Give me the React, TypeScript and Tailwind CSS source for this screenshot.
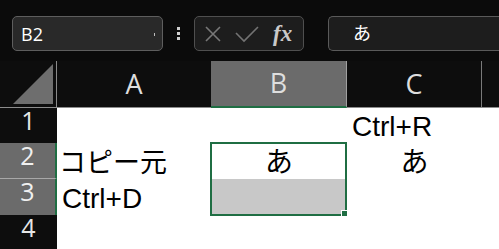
import React from 'react';

const cellFont = "font-['Liberation_Sans','Noto_Sans_CJK_JP',sans-serif]";
const headFont = "font-['Open_Sans','Noto_Sans',sans-serif]";

interface Row {
  n: string;
  h: string;
  sel: boolean;
  a?: string;
  b?: string;
  c?: string;
  fill?: boolean;
}

const rows: Row[] = [
  { n: '1', h: 'h-[35px]', sel: false, c: 'Ctrl+R' },
  { n: '2', h: 'h-[36px]', sel: true, a: 'コピー元', b: 'あ', c: 'あ' },
  { n: '3', h: 'h-[36px]', sel: true, a: 'Ctrl+D', fill: true },
  { n: '4', h: 'h-[36px]', sel: false },
];

const cols = 'grid grid-cols-[57px_154px_136px_135px_1fr]';

export default function App() {
  return (
    <div className="w-[499px] h-[249px] overflow-hidden bg-[#0b0b0b] select-none">
      {/* Formula bar */}
      <div className="h-[61px] flex items-start pt-[16px] pl-[12px]">
        <div className="w-[151px] h-[35px] rounded-[5px] bg-[#292929] border border-[#5e5e5e] flex items-center pl-[8px] pr-[7px] justify-between">
          <span className={`${headFont} text-[18px] leading-none text-white`}>B2</span>
          <span className="w-[1px] h-[3px] bg-[#bdbdbd] mt-[1px]" />
        </div>
        <div className="w-[31px] h-[35px] flex flex-col items-center justify-center gap-[2px]">
          <span className="w-[3px] h-[3px] bg-[#cfcfcf]" />
          <span className="w-[3px] h-[3px] bg-[#cfcfcf]" />
          <span className="w-[3px] h-[3px] bg-[#cfcfcf]" />
        </div>
        <div className="w-[110px] h-[35px] rounded-[5px] bg-[#1d1d1d] border border-[#4f4f4f] flex items-center pl-[9px]">
          <svg width="18" height="18" viewBox="0 0 18 18" className="mt-[1px]">
            <path d="M2 2 L16 16 M16 2 L2 16" stroke="#787878" strokeWidth="1.6" fill="none" />
          </svg>
          <svg width="26" height="18" viewBox="0 0 26 18" className="ml-[12px] mt-[1px]">
            <path d="M2 8 L10 16 L24 2" stroke="#737373" strokeWidth="1.6" fill="none" />
          </svg>
          <span className="ml-[13px] font-['Liberation_Serif',serif] italic font-bold text-[23px] leading-none text-[#c9c9c9]">
            fx
          </span>
        </div>
        <div className="ml-[24px] flex-1 h-[35px] rounded-l-[5px] bg-[#1d1d1d] border border-r-0 border-[#5a5a5a] flex items-center pl-[24px]">
          <span className={`${cellFont} text-[18px] leading-none text-white`}>あ</span>
        </div>
      </div>

      {/* Column headers */}
      <div className={`${cols} h-[47px] bg-[#0d0d0d] border-b border-[#8c8c8c] ${headFont} text-[27px] text-[#dedede]`}>
        <div className="border-r border-[#8a8a8a] flex items-end justify-end pr-[3px] pb-[3px]">
          <div className="w-[40px] h-[40px] bg-[#6e6e6e] [clip-path:polygon(100%_0,100%_100%,0_100%)]" />
        </div>
        <div className="flex items-center justify-center">A</div>
        <div className="bg-[#6b6b6b] border-r border-[#a0a0a0] border-b-2 border-b-[#1f6e43] -mb-[1px] flex items-center justify-center">B</div>
        <div className="border-r border-[#7a7a7a] flex items-center justify-center">C</div>
        <div />
      </div>

      {/* Cells */}
      <div className="relative bg-white">
        {rows.map((r) => (
          <div key={r.n} className={`${cols} ${r.h}`}>
            <div
              className={
                r.sel
                  ? `bg-[#6b6b6b] border-r-2 border-[#1f6e43] ${r.n === '2' ? 'border-b border-b-[#a8a8a8]' : ''} flex items-start justify-center ${headFont} text-[25px] leading-[24px] text-[#f0f0f0]`
                  : `bg-[#0d0d0d] flex items-start justify-center ${headFont} text-[25px] leading-[24px] text-[#e6e6e6]`
              }
            >
              {r.n}
            </div>
            <div
              className={`flex items-end pb-[2px] ${r.n === '2' ? 'pl-[2px] text-[27px]' : 'pl-[5px] text-[28px]'} ${cellFont} leading-none text-black whitespace-nowrap`}
            >
              {r.a}
            </div>
            <div className={`flex items-end justify-center pb-[2px] ${cellFont} text-[28px] leading-none text-black ${r.fill ? 'bg-[#c8c8c8]' : ''}`}>
              {r.b}
            </div>
            <div className={`flex items-end pb-[2px] ${r.c === 'あ' ? 'justify-center' : 'pl-[5px]'} ${cellFont} text-[28px] leading-none text-black whitespace-nowrap`}>
              {r.c}
            </div>
            <div />
          </div>
        ))}

        {/* Selection */}
        <div className="absolute left-[210px] top-[34px] w-[137px] h-[74px] border-2 border-[#1f6e43]">
          <div className="absolute -right-[3px] -bottom-[3px] w-[7px] h-[7px] bg-[#1f6e43] border border-white" />
        </div>
      </div>
    </div>
  );
}
